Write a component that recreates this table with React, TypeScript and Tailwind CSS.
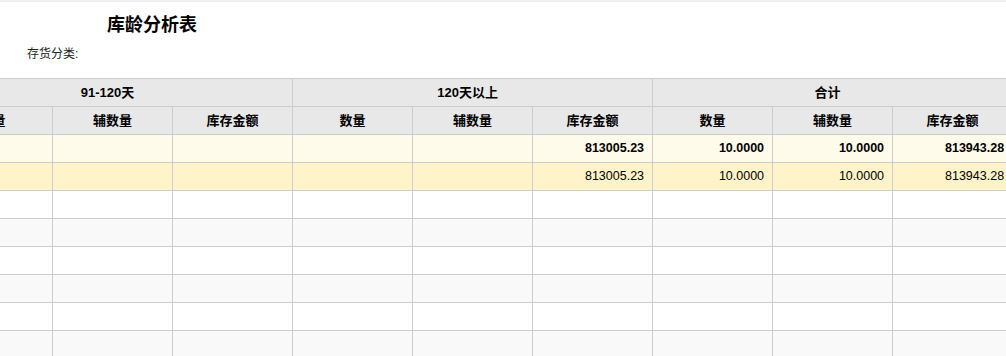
import React from 'react';

const groups = ['91-120天', '120天以上', '合计'];
const subCols = ['数量', '辅数量', '库存金额'];

// 9 columns: 3 per group
const totalRow = ['', '', '', '', '', '813005.23', '10.0000', '10.0000', '813943.28'];

export default function App() {
  const blankRows = Array.from({ length: 8 });

  return (
    <div
      className="w-[1006px] h-[356px] overflow-hidden bg-white text-black"
      style={{ fontFamily: '"Liberation Sans", "Noto Sans CJK SC", sans-serif' }}
    >
      <div className="h-[2px] bg-[#efefef]" />

      {/* 标题 */}
      <div className="h-[76px] relative">
        <div className="pt-[10px] pl-[107px] text-[18px] font-bold leading-[26px]">库龄分析表</div>
        <div className="pt-[8px] pl-[27px] text-[12px] leading-[16px] text-[#222]">存货分类:</div>
      </div>

      {/* 表格 */}
      <div className="overflow-hidden">
        <table className="-ml-[68px] table-fixed border-collapse w-[1081px]">
          <colgroup>
            {subCols.concat(subCols, subCols).map((_, i) => (
              <col key={i} className="w-[120px]" />
            ))}
          </colgroup>
          <thead>
            <tr className="h-[28px] bg-[#e8e8e8]">
              {groups.map((g) => (
                <th
                  key={g}
                  colSpan={3}
                  className="border border-[#cccccc] text-[13px] font-bold text-center pr-[10px] p-0"
                >
                  {g}
                </th>
              ))}
            </tr>
            <tr className="h-[28px] bg-[#e8e8e8]">
              {groups.map((g) =>
                subCols.map((s) => (
                  <th key={g + s} className="border border-[#cccccc] text-[13px] font-bold text-center p-0">
                    {s}
                  </th>
                ))
              )}
            </tr>
          </thead>
          <tbody>
            <tr className="h-[28px] bg-[#fffbea]">
              {totalRow.map((v, i) => (
                <td key={i} className="border border-[#cccccc] text-[12.5px] font-bold text-right pr-[8px] p-0">
                  {v}
                </td>
              ))}
            </tr>
            <tr className="h-[28px] bg-[#fff4c9]">
              {totalRow.map((v, i) => (
                <td key={i} className="border border-[#cccccc] text-[12.5px] text-right pr-[8px] p-0">
                  {v}
                </td>
              ))}
            </tr>
            {blankRows.map((_, r) => (
              <tr key={r} className={r % 2 === 0 ? 'h-[28px] bg-white' : 'h-[28px] bg-[#f9f9f9]'}>
                {totalRow.map((_, i) => (
                  <td key={i} className="border border-[#cccccc] p-0" />
                ))}
              </tr>
            ))}
          </tbody>
        </table>
      </div>
    </div>
  );
}
